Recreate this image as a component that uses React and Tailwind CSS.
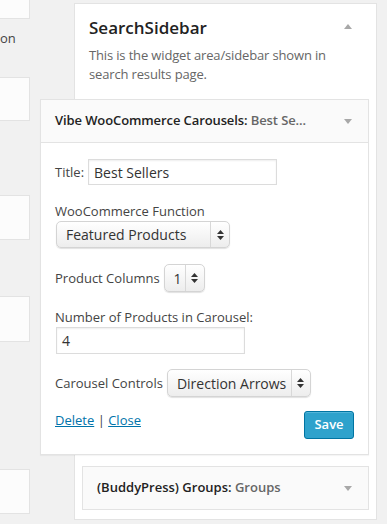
import React from 'react';

const font = { fontFamily: '"Open Sans", "Noto Sans", Arial, sans-serif' };

// Mac-style native select with the stacked up/down arrows
function FakeSelect({ value, className = '' }) {
  return (
    <div
      className={`flex items-stretch rounded-[5px] border border-[#d4d4d4] bg-gradient-to-b from-white to-[#ededed] shadow-[0_1px_1px_rgba(0,0,0,0.12)] ${className}`}
    >
      <span className="flex flex-1 items-center pl-[9px] text-[14px] text-[#333]">{value}</span>
      <span className="flex w-[19px] flex-col items-center justify-center gap-[2px] border-l border-[#d8d8d8]">
        <svg width="7" height="4" viewBox="0 0 7 4">
          <path d="M3.5 0 L7 4 L0 4 Z" fill="#333" />
        </svg>
        <svg width="7" height="4" viewBox="0 0 7 4">
          <path d="M0 0 L7 0 L3.5 4 Z" fill="#333" />
        </svg>
      </span>
    </div>
  );
}

function Arrow({ up }) {
  return (
    <svg width="8" height="5" viewBox="0 0 8 5">
      <path d={up ? 'M4 0 L8 5 L0 5 Z' : 'M0 0 L8 0 L4 5 Z'} fill="#a8a8a8" />
    </svg>
  );
}

function LeftBox({ className = '' }) {
  return <div className={`w-[30px] border-r border-b border-t border-[#e3e3e3] bg-[#fcfcfc] ${className}`} />;
}

export default function App() {
  return (
    <div style={font} className="flex h-[524px] w-[387px] overflow-hidden bg-[#f1f1f1] text-[13px] text-[#444]">
      {/* cut-off column on the left */}
      <div className="flex w-[30px] shrink-0 flex-col">
        <div className="h-[19px] w-[30px] border-r border-b border-[#e3e3e3] bg-[#fcfcfc]" />
        <p className="mt-[10px] text-[13px] leading-[18px] text-[#444]">on</p>
        <LeftBox className="mt-[30px] h-[44px]" />
        <LeftBox className="mt-[74px] h-[45px]" />
        <LeftBox className="mt-[56px] h-[46px]" />
        <LeftBox className="mt-[127px] h-[45px]" />
      </div>

      {/* sidebar panel */}
      <div className="ml-[44px] mt-[3px] h-[517px] w-[303px] shrink-0 border border-[#e3e3e3] bg-white">
        <div className="flex items-start justify-between pl-[14px] pr-[24px] pt-[10px]">
          <h2 className="text-[17px] font-semibold leading-[28px] text-[#222]">SearchSidebar</h2>
          <span className="mt-[10px]">
            <Arrow up />
          </span>
        </div>
        <p className="mt-[4px] pl-[14px] pr-[10px] text-[13px] leading-[18.5px] tracking-[-0.15px] text-[#666]">
          This is the widget area/sidebar shown in search results page.
        </p>

        <div className="px-[7px]">
          {/* expanded widget, wider than its sidebar */}
          <div className="relative -ml-[42px] mt-[16px] border border-[#e3e3e3] bg-white shadow-[0_1px_1px_rgba(0,0,0,0.04)]">
            <div className="flex h-[43px] items-center justify-between border-b border-[#e3e3e3] bg-[#fafafa] pl-[14px] pr-[16px]">
              <span className="text-[13px] font-semibold tracking-[-0.1px] text-[#222]">
                Vibe WooCommerce Carousels: <span className="text-[#666]">Best Se...</span>
              </span>
              <Arrow />
            </div>

            <div className="px-[14px] pb-[15px] pt-[16px]">
              <div className="flex h-[26px] items-center gap-[4px]">
                <span className="leading-[18px]">Title:</span>
                <div className="flex h-[26px] w-[189px] items-center border border-[#dcdcdc] bg-white pl-[5px] text-[14px] text-[#333] shadow-[inset_0_1px_2px_rgba(0,0,0,0.07)]">
                  Best Sellers
                </div>
              </div>

              <p className="mt-[17px] leading-[18px]">WooCommerce Function</p>
              <FakeSelect value="Featured Products" className="ml-[1px] mt-[1px] h-[27px] w-[174px]" />

              <div className="mt-[16px] flex h-[28px] items-center gap-[4px]">
                <span className="leading-[18px]">Product Columns</span>
                <FakeSelect value="1" className="h-[28px] w-[41px]" />
              </div>

              <p className="mt-[16px] leading-[18px]">Number of Products in Carousel:</p>
              <div className="ml-[1px] mt-[1px] flex h-[27px] w-[189px] items-center border border-[#dcdcdc] bg-white pl-[5px] text-[14px] text-[#333] shadow-[inset_0_1px_2px_rgba(0,0,0,0.07)]">
                4
              </div>

              <div className="mt-[15px] flex h-[28px] items-center gap-[4px]">
                <span className="leading-[18px]">Carousel Controls</span>
                <FakeSelect value="Direction Arrows" className="h-[28px] w-[144px]" />
              </div>

              <div className="mt-[14px] flex items-start justify-between">
                <p className="leading-[18px] text-[#444]">
                  <a href="#" className="text-[#0073aa] underline">Delete</a>
                  {' | '}
                  <a href="#" className="text-[#0073aa] underline">Close</a>
                </p>
                <button
                  type="button"
                  className="h-[28px] w-[50px] rounded-[3px] border border-[#0074a2] bg-[#2ea2cc] text-[13px] font-semibold text-white shadow-[inset_0_1px_0_rgba(120,200,230,0.5)]"
                >
                  Save
                </button>
              </div>
            </div>
          </div>

          {/* collapsed widget */}
          <div className="mt-[11px] flex h-[44px] items-center justify-between border border-[#e3e3e3] bg-[#fafafa] pl-[14px] pr-[16px]">
            <span className="text-[13px] font-semibold text-[#222]">
              (BuddyPress) Groups: <span className="text-[#666]">Groups</span>
            </span>
            <Arrow />
          </div>
        </div>
      </div>
    </div>
  );
}
